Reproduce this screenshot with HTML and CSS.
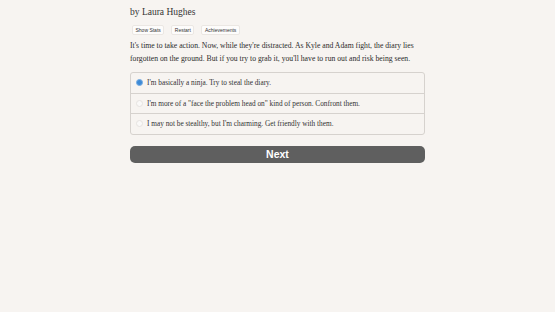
FILE: index.html
```html
<!DOCTYPE html>
<html>
<head>
    <title>Choice</title>
    <link rel="stylesheet" href="styles.css">
</head>
<body>
    <div class="container">
        <div class="author">by Laura Hughes</div>

        <div class="toolbar">
            <button class="small-button">Show Stats</button>
            <button class="small-button">Restart</button>
            <button class="small-button">Achievements</button>
        </div>

        <p class="text">It's time to take action. Now, while they're distracted. As Kyle and Adam fight, the diary lies forgotten on the ground. But if you try to grab it, you'll have to run out and risk being seen.</p>

        <div class="choices">
            <label class="choice selected"><span class="radio"></span>I'm basically a ninja. Try to steal the diary.</label>
            <label class="choice"><span class="radio"></span>I'm more of a "face the problem head on" kind of person. Confront them.</label>
            <label class="choice"><span class="radio"></span>I may not be stealthy, but I'm charming. Get friendly with them.</label>
        </div>

        <button class="next-button">Next</button>
    </div>
</body>
</html>
```

FILE: styles.css
```css
body {
    margin: 0;
    padding: 0;
    background: #f7f4f1;
    color: #2b2b2b;
    font-family: 'Liberation Serif', Georgia, serif;
}

.container {
    width: 295px;
    margin: 0 auto;
    padding-top: 6px;
}

.author {
    font-size: 9.5px;
    line-height: 12px;
    color: #333;
}

.toolbar {
    display: flex;
    gap: 7px;
    margin-top: 7px;
    padding-left: 2px;
}

.small-button {
    font-family: 'Liberation Sans', Arial, sans-serif;
    font-size: 5px;
    line-height: 6px;
    padding: 1px 2.5px;
    background: #fdfcfb;
    color: #333;
    border: 1px solid #ebe7e3;
    border-radius: 2px;
}

.text {
    font-size: 7.7px;
    line-height: 13px;
    margin: 4px 0 0 0;
}

.choices {
    margin-top: 7px;
    border: 1px solid #d6d2ce;
    border-radius: 3px;
    display: flex;
    flex-direction: column;
}

.choice {
    display: flex;
    align-items: center;
    height: 19.5px;
    padding-left: 5px;
    font-size: 7.3px;
    color: #333;
    border-top: 1px solid #d6d2ce;
}

.choice:first-child {
    border-top: none;
}

.radio {
    width: 5px;
    height: 5px;
    border-radius: 50%;
    border: 1px solid #e6e3e0;
    background: #faf9f8;
    margin-right: 4px;
}

.selected .radio {
    background: #3d8ad6;
    border-color: #7aaee3;
}

.next-button {
    display: block;
    width: 100%;
    height: 17px;
    margin-top: 11px;
    background: #5f5f5f;
    color: #fff;
    border: none;
    border-radius: 5px;
    font-family: 'Liberation Sans', Arial, sans-serif;
    font-weight: bold;
    font-size: 10.5px;
}
```
